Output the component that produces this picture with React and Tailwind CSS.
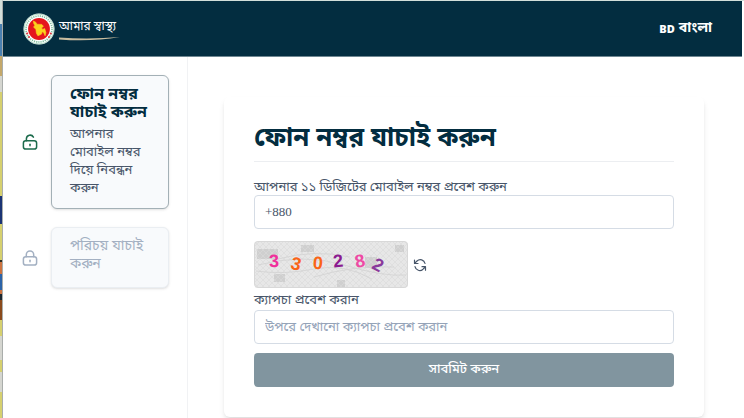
const backdrop = [
  'h-6 bg-[#d3dfda]',
  'h-8 bg-[#4a80b0]',
  'h-5 bg-[#c4a86a]',
  'h-4 bg-[#d5d6d0]',
  'h-[104px] bg-[#d6d06e]',
  'h-7 bg-[#1b3474]',
  'h-9 bg-[#d6d06e]',
  'h-0.5 bg-[#2b2b22]',
  'h-3 bg-[#cc7340]',
  'h-4 bg-[#2c63a8]',
  'h-1 bg-[#cc7340]',
  'h-1.5 bg-[#1c2730]',
  'h-5 bg-[#8a4a1c]',
  'h-4 bg-[#d6d06e]',
  'h-6 bg-[#d5d6d0]',
  'h-3 bg-[#d6d06e]',
  'h-5 bg-[#d5d6d0]',
  'grow bg-[#d6d06e]',
];

const digits = [
  { char: '3', x: 20, y: 20, rotate: -2, color: '#f0309c' },
  { char: '3', x: 42, y: 23, rotate: 14, color: '#fa6416' },
  { char: '0', x: 64, y: 22, rotate: 4, color: '#fa6416' },
  { char: '2', x: 84, y: 20, rotate: -6, color: '#8b1a90' },
  { char: '8', x: 106, y: 20, rotate: -12, color: '#ee4aa4' },
  { char: '2', x: 124, y: 24, rotate: 28, color: '#8a3a9c' },
];

const Logo = () => (
  <a href="#" aria-label="আমার স্বাস্থ্য" className="flex items-center gap-1 text-white">
    <svg viewBox="0 0 32 32" className="size-8 shrink-0">
      <circle cx="16" cy="16" r="15.5" fill="#fff" />
      <circle cx="16" cy="16" r="15" fill="none" stroke="#7fbf9f" strokeWidth="0.6" />
      <circle cx="16" cy="16" r="13" fill="none" stroke="#7cbd9c" strokeWidth="1.6" strokeDasharray="1.2 1" />
      <circle cx="16" cy="16" r="10.9" fill="#e5151d" />
      <path
        d="M10.4 8l2.6 1.4.8 1.8 5 .2 1.6 1.8-1.8 1.8 1.1 1.4 2-.8 1.2 4-.8 3.2-1.5-3.4-1.5-.7-.6 2.4-3.6 1.7-1.5-2.6-.5-4-2.3-2 1.2-1.9-1.1-1.9z"
        fill="#fbd21c"
        stroke="#fbd21c"
        strokeWidth="0.6"
      />
      <g fill="#e5303a">
        <circle cx="4.2" cy="20.6" r="1" />
        <circle cx="6" cy="24" r="1" />
        <circle cx="27.8" cy="20.6" r="1" />
        <circle cx="26" cy="24" r="1" />
      </g>
    </svg>
    <span className="flex flex-col">
      <span className="text-xs leading-5">আমার স্বাস্থ্য</span>
      <svg viewBox="0 0 62 4" className="h-1 w-[62px]">
        <path d="M0 0.4Q30 2.6 61 0Q32 5 0 2.4z" fill="#c9bd9f" />
      </svg>
    </span>
  </a>
);

const LockIcon = ({ open, className }) => (
  <svg
    viewBox="0 0 16 16"
    fill="none"
    stroke="currentColor"
    strokeWidth="1.5"
    strokeLinecap="round"
    strokeLinejoin="round"
    className={className}
    aria-hidden="true"
  >
    <rect x="1.4" y="6.7" width="13.2" height="8.4" rx="2.4" />
    <path d={open ? 'M4.4 6.7V4.6A3.7 3.7 0 0 1 11.4 3.2' : 'M4.3 6.7V4.7a3.7 3.7 0 0 1 7.4 0v2'} />
    <path d="M8 10.2v1.5" />
  </svg>
);

const RefreshIcon = () => (
  <svg
    viewBox="0 0 14 14"
    fill="none"
    stroke="currentColor"
    strokeWidth="1.2"
    strokeLinecap="round"
    strokeLinejoin="round"
    className="size-3.5"
    aria-hidden="true"
  >
    <path d="M1.5 2v3.5H5M1.8 5.2L4 3a4.8 4.8 0 0 1 8 2.5M12.5 12.2V8.7H9M12.2 9L10 11.2A4.8 4.8 0 0 1 2 8.7" />
  </svg>
);

const Captcha = () => (
  <svg viewBox="0 0 154 47" role="img" aria-label="ক্যাপচা" className="h-[47px] w-[154px] rounded">
    <defs>
      <pattern id="mesh" width="6" height="6" patternUnits="userSpaceOnUse">
        <path d="M0 0l6 6M6 0L0 6" stroke="#dadada" strokeWidth="0.6" />
      </pattern>
    </defs>
    <rect width="154" height="47" fill="#e7e7e7" />
    <g fill="#cfcfcf">
      <rect x="3" y="8" width="21" height="10" />
      <rect x="47" y="4" width="13" height="7" />
      <rect x="20" y="33" width="11" height="8" />
      <rect x="83" y="39" width="8" height="8" />
      <rect x="141" y="4" width="9" height="7" />
      <rect x="111" y="16" width="12" height="11" />
    </g>
    <rect width="154" height="47" fill="url(#mesh)" />
    <path
      d="M2 30Q30 34 60 28T118 38M4 24Q50 12 90 24T152 34M24 18Q60 8 96 16M60 36Q100 24 140 26"
      fill="none"
      stroke="#d2d2d2"
      strokeWidth="0.8"
    />
    <rect x="0.5" y="0.5" width="153" height="46" rx="3.5" fill="none" stroke="#d8d8d8" />
    {digits.map(({ char, x, y, rotate, color }) => (
      <text
        key={x}
        x={x}
        y={y}
        fill={color}
        textAnchor="middle"
        dominantBaseline="central"
        transform={`rotate(${rotate} ${x} ${y})`}
        className="font-['Liberation_Sans'] text-[18px] font-bold"
      >
        {char}
      </text>
    ))}
  </svg>
);

const App = () => {
  return (
    <div className="flex min-h-screen bg-white font-['Noto_Sans_Bengali','Noto_Sans',sans-serif] text-[#475569]">
      <div className="flex w-0.5 shrink-0 flex-col" aria-hidden="true">
        {backdrop.map((band, i) => (
          <div key={i} className={band} />
        ))}
      </div>

      <div className="flex min-w-0 grow flex-col border-t border-l border-t-[#d3dfda] border-l-[#a9adab]">
        <header className="mr-0.5 flex h-14 items-center justify-between border-b border-[#6f8792] bg-[#032d40] pr-[30px] pl-5">
          <Logo />
          <button type="button" className="flex items-end gap-1 text-sm font-bold text-white">
            <span className="text-[11px] font-black">BD</span>
            <span>বাংলা</span>
          </button>
        </header>

        <div className="flex grow">
          <aside className="w-[185px] shrink-0 border-r border-[#f1f2f4] pt-[18px] pr-[18px] pl-[19px]">
            <ol className="flex flex-col gap-[18px]">
              <li className="flex items-center gap-[13px]">
                <LockIcon open className="size-4 shrink-0 text-[#1c6b4c]" />
                <div className="h-[134px] grow rounded-md border border-[#a3b0b6] bg-[#f8fafc] py-2.5 pr-4 pl-[18px] shadow-sm">
                  <h2 className="text-base leading-[18px] font-bold text-[#032d40]">ফোন নম্বর যাচাই করুন</h2>
                  <p className="mt-1 text-[13px] leading-[18px]">আপনার মোবাইল নম্বর দিয়ে নিবন্ধন করুন</p>
                </div>
              </li>
              <li className="flex items-center gap-[13px]">
                <LockIcon className="size-4 shrink-0 text-[#a3b0c2]" />
                <div className="h-[61px] grow rounded-md border border-[#eaeef2] bg-[#f8fafc] py-2.5 pr-4 pl-[18px] shadow-sm">
                  <h2 className="text-sm leading-[18px] text-[#a3b0c2]">পরিচয় যাচাই করুন</h2>
                </div>
              </li>
            </ol>
          </aside>

          <main className="min-w-0 grow pt-10 pr-10 pl-9">
            <form className="rounded-md px-[30px] pt-6 pb-[30px] shadow-md" onSubmit={(e) => e.preventDefault()}>
              <h1 className="border-b border-[#eceef1] pb-0.5 text-[26px] leading-[38px] font-bold text-[#032d40]">
                ফোন নম্বর যাচাই করুন
              </h1>

              <label htmlFor="phone" className="mt-[19px] block text-[13px] leading-[14px]">
                আপনার ১১ ডিজিটের মোবাইল নম্বর প্রবেশ করুন
              </label>
              <input
                id="phone"
                type="tel"
                defaultValue="+880"
                className="block h-[34px] w-full rounded border border-[#d5dce5] px-2.5 font-['Liberation_Serif',serif] text-[13px]"
              />

              <div className="mt-3 flex items-center gap-[5px]">
                <Captcha />
                <button type="button" aria-label="রিফ্রেশ">
                  <RefreshIcon />
                </button>
              </div>

              <label htmlFor="captcha" className="mt-1.5 mb-0.5 block text-[13px] leading-[14px]">
                ক্যাপচা প্রবেশ করান
              </label>
              <input
                id="captcha"
                type="text"
                placeholder="উপরে দেখানো ক্যাপচা প্রবেশ করান"
                className="block h-[34px] w-full rounded border border-[#d5dce5] px-2.5 text-[13px] placeholder:text-[#94a3b8]"
              />

              <button type="submit" className="mt-[9px] h-[34px] w-full rounded bg-[#81959f] text-[13px] font-medium text-white">
                সাবমিট করুন
              </button>
            </form>
          </main>
        </div>
      </div>
    </div>
  );
};

export default App;
